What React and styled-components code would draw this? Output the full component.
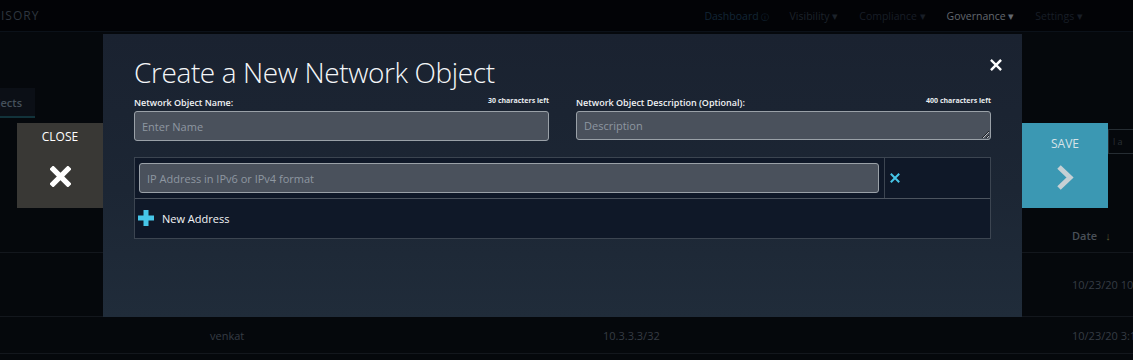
import styled, { createGlobalStyle } from 'styled-components';

const GlobalStyle = createGlobalStyle`
  html, body {
    margin: 0;
    padding: 0;
    background: #04070b;
  }
  body {
    font-family: 'Open Sans', 'Noto Sans', sans-serif;
    overflow: hidden;
  }
  * {
    box-sizing: border-box;
  }
`;

/* --------------------
Background page
-------------------- */
const Page = styled.div`
  position: relative;
  width: 1133px;
  height: 360px;
  overflow: hidden;
  background: #05080c;
`;

const Nav = styled.header`
  height: 32px;
  display: flex;
  align-items: center;
  background: #020306;
  border-bottom: 1px solid #0b1119;
`;

const Brand = styled.div`
  padding-left: 1px;
  font-size: 12px;
  letter-spacing: 1px;
  color: #2e363f;
`;

const NavLinks = styled.nav`
  margin-left: auto;
  margin-right: 50px;
  display: flex;
  align-items: center;
  gap: 21px;
`;

const NavLink = styled.span`
  font-size: 10.5px;
  color: ${(p) => p.$color || '#1a2028'};
  white-space: nowrap;
`;

const NavInfo = styled.span`
  font-size: 8px;
  margin-left: 2px;
`;

const Toolbar = styled.div`
  height: 187px;
  display: flex;
  justify-content: space-between;
  padding-top: 56px;
`;

const Tab = styled.div`
  width: 35px;
  height: 30px;
  display: flex;
  align-items: center;
  justify-content: flex-end;
  padding-right: 13px;
  overflow: hidden;
  background: #0b0f16;
  border-bottom: 2px solid #12333b;
  font-size: 11px;
  font-weight: 600;
  color: #45505b;
  white-space: nowrap;
`;

const FilterBox = styled.div`
  margin-top: 41px;
  width: 25px;
  height: 25px;
  border: 1px solid #262d33;
  border-right: 0;
  font-size: 9px;
  color: #2a3036;
  padding: 5px 0 0 4px;
  white-space: nowrap;
  overflow: hidden;
`;

const TableRow = styled.div`
  display: grid;
  grid-template-columns: 210px 393px 469px 200px;
  align-items: center;
  height: ${(p) => p.$h}px;
  border-bottom: 1px solid #13171d;
  font-size: 11px;
  color: ${(p) => (p.$head ? '#4a5058' : '#363c44')};
  font-weight: ${(p) => (p.$head ? 600 : 400)};
  white-space: nowrap;
`;

const SortArrow = styled.span`
  margin-left: 8px;
  font-weight: 700;
  color: #5a5a2c;
`;

/* --------------------
Modal
-------------------- */
const Modal = styled.section`
  position: absolute;
  left: 103px;
  top: 34px;
  width: 919px;
  height: 283px;
  padding: 18px 31px 0;
  background: linear-gradient(180deg, #1a2230 0%, #1c2634 55%, #202c3a 100%);
`;

const Title = styled.h1`
  margin: 0;
  font-size: 28px;
  line-height: 40px;
  font-weight: 300;
  letter-spacing: -0.4px;
  color: #f4f6f8;
`;

const CloseIcon = styled.button`
  position: absolute;
  right: 20px;
  top: 25px;
  width: 12px;
  height: 12px;
  padding: 0;
  border: 0;
  background: none;
  display: flex;
`;

const Fields = styled.div`
  margin-top: 5px;
  display: grid;
  grid-template-columns: 1fr 1fr;
  gap: 27px;
`;

const Field = styled.div`
  display: flex;
  flex-direction: column;
`;

const LabelRow = styled.div`
  height: 12px;
  margin-bottom: 2px;
  display: flex;
  justify-content: space-between;
  align-items: flex-end;
`;

const Label = styled.label`
  font-size: 9px;
  line-height: 12px;
  font-weight: 600;
  color: #f0f2f4;
`;

const Counter = styled.span`
  font-size: 7px;
  line-height: 10px;
  font-weight: 700;
  color: #e8ecef;
  margin-bottom: 3px;
`;

const inputStyles = `
  width: 100%;
  height: 30px;
  margin: 0;
  padding: 0 7px;
  background: #4a515c;
  border: 1px solid #9aa1a8;
  border-radius: 3px;
  font-family: 'Open Sans', 'Noto Sans', sans-serif;
  font-size: 11px;
  color: #e0e4e8;
  outline: none;
  &::placeholder {
    color: #8e97a1;
  }
`;

const TextInput = styled.input`
  ${inputStyles}
`;

const TextArea = styled.textarea`
  ${inputStyles}
  height: 29px;
  padding-top: 6px;
  resize: vertical;
  display: block;
`;

const AddressTable = styled.div`
  margin-top: 16px;
  border: 1px solid #3c4551;
  background: #0f1828;
`;

const AddressRow = styled.div`
  display: grid;
  grid-template-columns: 1fr 106px;
  border-bottom: 1px solid #4c545f;
`;

const AddressCell = styled.div`
  padding: 5px 5px 5px 4px;
`;

const RemoveCell = styled.div`
  display: flex;
  align-items: center;
  padding-left: 5px;
  border-left: 1px solid #3c4551;
`;

const AddRow = styled.div`
  height: 39px;
  display: flex;
  align-items: center;
  gap: 8px;
  padding-left: 3px;
  padding-bottom: 1px;
  font-size: 11px;
  color: #f2f4f6;
`;

/* --------------------
Side buttons
-------------------- */
const SideButton = styled.button`
  position: absolute;
  top: 123px;
  left: ${(p) => p.$left}px;
  width: 86px;
  height: 85px;
  border: 0;
  padding: ${(p) => p.$pad}px 0 0;
  display: flex;
  flex-direction: column;
  align-items: center;
  gap: ${(p) => p.$gap}px;
  background: ${(p) => p.$bg};
  color: ${(p) => p.$color};
  font-family: 'Open Sans', 'Noto Sans', sans-serif;
  font-size: 12px;
  line-height: 16px;
`;

function XMark({ size, color, weight }) {
  return (
    <svg width={size} height={size} viewBox="0 0 20 20">
      <path d="M3 3L17 17M17 3L3 17" stroke={color} strokeWidth={weight} strokeLinecap="square" />
    </svg>
  );
}

function PlusMark() {
  return (
    <svg width="16" height="16" viewBox="0 0 16 16">
      <path d="M5.5 0h5v5.5H16v5h-5.5V16h-5v-5.5H0v-5h5.5z" fill="#46c6e8" />
    </svg>
  );
}

function Chevron() {
  return (
    <svg width="18" height="27" viewBox="0 0 18 27">
      <path d="M3 3l11 10.5L3 24" fill="none" stroke="#c6d0d4" strokeWidth="5" />
    </svg>
  );
}

export default function App() {
  return (
    <Page>
      <GlobalStyle />
      <Nav>
        <Brand>ISORY</Brand>
        <NavLinks>
          <NavLink $color="#122636">
            Dashboard<NavInfo>ⓘ</NavInfo>
          </NavLink>
          <NavLink $color="#1c222a">Visibility ▾</NavLink>
          <NavLink $color="#181e26">Compliance ▾</NavLink>
          <NavLink $color="#62686f">Governance ▾</NavLink>
          <NavLink $color="#181e26">Settings ▾</NavLink>
        </NavLinks>
      </Nav>
      <Toolbar>
        <Tab>Objects</Tab>
        <FilterBox>l a</FilterBox>
      </Toolbar>
      <TableRow $h={34} $head>
        <span />
        <span />
        <span />
        <span>
          Date<SortArrow>↓</SortArrow>
        </span>
      </TableRow>
      <TableRow $h={64}>
        <span />
        <span />
        <span />
        <span>10/23/20 10:41 AM</span>
      </TableRow>
      <TableRow $h={37}>
        <span />
        <span>venkat</span>
        <span>10.3.3.3/32</span>
        <span>10/23/20 3:16 PM</span>
      </TableRow>

      <SideButton $left={17} $pad={6} $gap={21} $bg="#393835" $color="#ffffff">
        CLOSE
        <XMark size={21} color="#ffffff" weight={5} />
      </SideButton>

      <Modal>
        <CloseIcon aria-label="Close">
          <XMark size={12} color="#ffffff" weight={4} />
        </CloseIcon>
        <Title>Create a New Network Object</Title>
        <Fields>
          <Field>
            <LabelRow>
              <Label>Network Object Name:</Label>
              <Counter>30 characters left</Counter>
            </LabelRow>
            <TextInput placeholder="Enter Name" />
          </Field>
          <Field>
            <LabelRow>
              <Label>Network Object Description (Optional):</Label>
              <Counter>400 characters left</Counter>
            </LabelRow>
            <TextArea placeholder="Description" />
          </Field>
        </Fields>
        <AddressTable>
          <AddressRow>
            <AddressCell>
              <TextInput placeholder="IP Address in IPv6 or IPv4 format" />
            </AddressCell>
            <RemoveCell>
              <XMark size={10} color="#46c6e8" weight={4} />
            </RemoveCell>
          </AddressRow>
          <AddRow>
            <PlusMark />
            New Address
          </AddRow>
        </AddressTable>
      </Modal>

      <SideButton $left={1022} $pad={13} $gap={12} $bg="#3b98b3" $color="#d6e3e8">
        SAVE
        <Chevron />
      </SideButton>
    </Page>
  );
}
